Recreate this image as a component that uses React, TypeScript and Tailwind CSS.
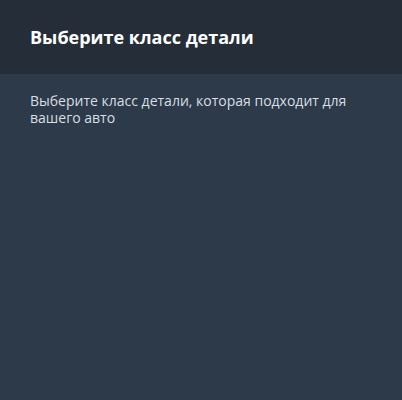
import React from 'react';

export default function App() {
  return (
    <div className="w-[402px] h-[400px] flex flex-col bg-[#2c3a4a] font-['Open_Sans',sans-serif]">
      <div className="h-[74px] flex items-center px-[30px] bg-[#252e38]">
        <h1 className="text-[18px] leading-[24px] font-bold text-white">Выберите класс детали</h1>
      </div>
      <div className="px-[30px] pt-[18px]">
        <p className="text-[14px] leading-[17px] text-[#d9dee3]">
          Выберите класс детали, которая подходит для вашего авто
        </p>
      </div>
    </div>
  );
}
